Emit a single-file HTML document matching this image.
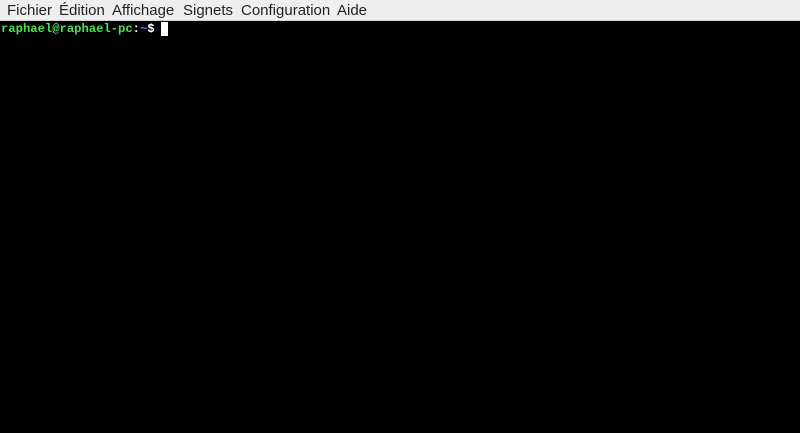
<!DOCTYPE html>
<html><head><style>
body{margin:0;width:800px;height:433px;background:#000;overflow:hidden}
.menu{position:relative;height:21px;background:#efefef;border-bottom:1px solid #d0d0d0;box-sizing:border-box;font-family:"Liberation Sans",sans-serif;font-size:15px;color:#222;line-height:21px;white-space:pre}
.menu span{position:absolute;top:0}
.term{position:absolute;top:21px;left:1px;font-family:"Liberation Mono",monospace;font-weight:bold;font-size:12.2px;line-height:16px;color:#fff;white-space:pre}
.g{color:#4ee04e}.b{color:#5a7cff}
.cur{position:absolute;left:161px;top:22px;width:7px;height:14px;background:#fff}
</style></head><body>
<div class="menu"><span style="left:7px">Fichier</span><span style="left:59px">Édition</span><span style="left:112px">Affichage</span><span style="left:183px">Signets</span><span style="left:241px">Configuration</span><span style="left:337px">Aide</span></div>
<div class="term"><span class="g">raphael@raphael-pc</span>:<span class="b">~</span>$ </div>
<div class="cur"></div>
</body></html>
